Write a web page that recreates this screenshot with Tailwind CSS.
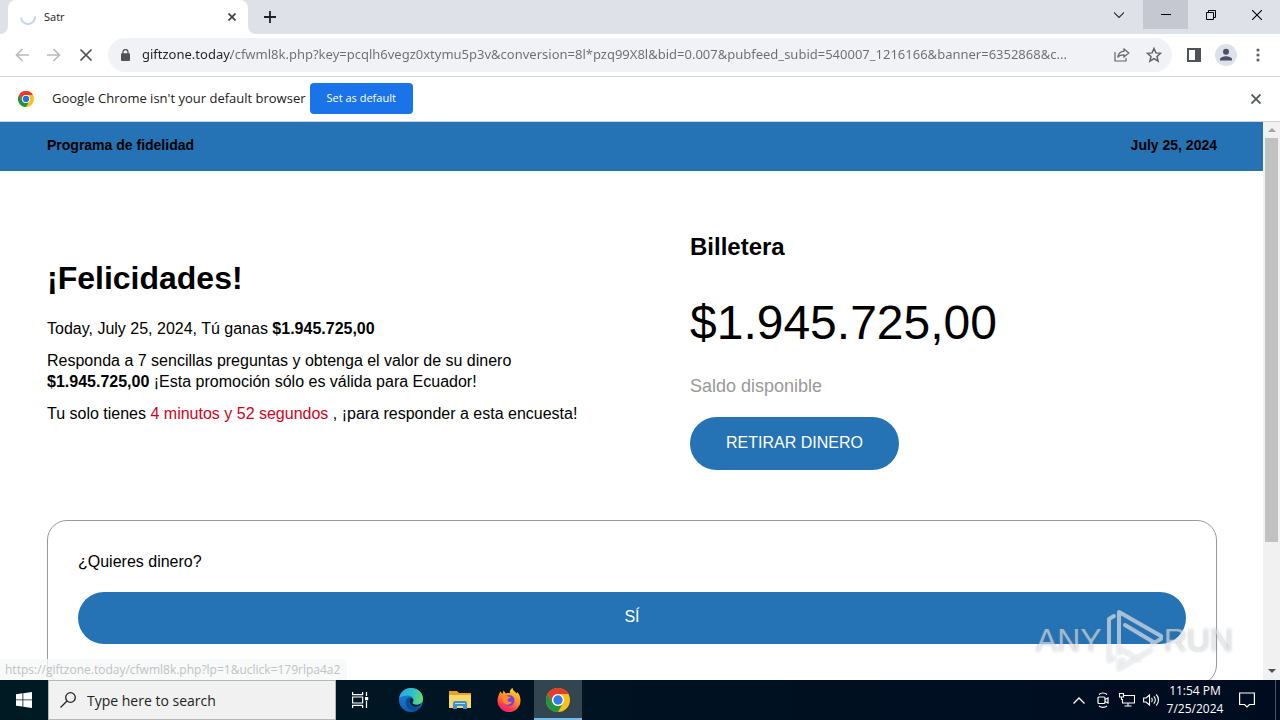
<!DOCTYPE html>
<html lang="es">
<head>
<meta charset="utf-8">
<title>Satr</title>
<script src="https://cdn.jsdelivr.net/npm/@tailwindcss/browser@4"></script>
</head>
<body class="flex h-screen flex-col overflow-hidden bg-white font-['Open_Sans','Noto_Sans',sans-serif] text-[#202124]">

<!-- Tab strip -->
<header class="flex h-[34px] shrink-0 bg-[#dee1e8]">
  <div class="w-2 bg-white"><div class="h-full rounded-br-lg bg-[#dee1e8]"></div></div>
  <div class="flex w-60 items-center rounded-t-lg bg-white pl-3 pr-2">
    <svg class="size-4" viewBox="0 0 16 16" fill="none" stroke="#c3d5f6" stroke-width="2"><path d="M1 8.5a7 7 0 0 0 14-1"/></svg>
    <span class="ml-2 flex-1 text-[11px]">Satr</span>
    <button class="flex size-4 items-center justify-center" aria-label="Close tab"><svg class="size-2" viewBox="0 0 8 8" stroke="#3c4043" stroke-width="1.7"><path d="M.5.5l7 7M7.5.5l-7 7"/></svg></button>
  </div>
  <div class="w-2 bg-white"><div class="h-full rounded-bl-lg bg-[#dee1e8]"></div></div>
  <button class="flex w-7 items-center justify-center" aria-label="New tab"><svg class="size-3" viewBox="0 0 12 12" stroke="#202124" stroke-width="1.8"><path d="M6 0v12M0 6h12"/></svg></button>
  <div class="flex-1"></div>
  <div class="flex h-[29px]">
    <button class="flex w-12 items-center justify-center" aria-label="Search tabs"><svg class="h-[6px] w-[10px]" viewBox="0 0 10 6" fill="none" stroke="#333" stroke-width="1.2"><path d="M0 .5l5 5 5-5"/></svg></button>
    <button class="flex w-[45px] items-center justify-center bg-[#c5c8d0]" aria-label="Minimize"><svg class="h-[1px] w-[10px]" viewBox="0 0 10 1"><path fill="#000" d="M0 0h10v1H0z"/></svg></button>
    <button class="flex w-[46px] items-center justify-center" aria-label="Restore"><svg class="size-[10px]" viewBox="0 0 10 10" fill="none" stroke="#000"><path d="M.5 2.5h7v7h-7zM2.5 2.5v-2h7v7h-2"/></svg></button>
    <button class="flex w-[46px] items-center justify-center" aria-label="Close"><svg class="size-[10px]" viewBox="0 0 10 10" stroke="#000" stroke-width="1.1"><path d="M0 0l10 10M10 0L0 10"/></svg></button>
  </div>
</header>

<!-- Toolbar -->
<div class="flex h-[43px] shrink-0 items-center border-b border-[#d6d8db] bg-white">
  <div class="flex w-[108px] items-center gap-[18px] pl-[15px]">
    <button aria-label="Back"><svg class="block h-[14px] w-[14px]" viewBox="0 0 14 14" fill="none" stroke="#b9bbbe" stroke-width="1.7"><path d="M14 7H1.5M7.5 1L1.5 7l6 6"/></svg></button>
    <button aria-label="Forward"><svg class="block h-[14px] w-[14px]" viewBox="0 0 14 14" fill="none" stroke="#b9bbbe" stroke-width="1.7"><path d="M0 7h12.500M6.500 1l6 6-6 6"/></svg></button>
    <button aria-label="Stop"><svg class="block h-[14px] w-[14px]" viewBox="0 0 14 14" stroke="#4a4d51" stroke-width="1.7"><path d="M1.500 1.500l11 11M12.500 1.500l-11 11"/></svg></button>
  </div>
  <div class="flex h-[34px] min-w-0 flex-1 items-center rounded-full bg-[#f0f2f5] pl-[13px] pr-[10px]">
    <svg class="h-[12px] w-[9px] shrink-0" viewBox="0 0 9 12"><path fill="#4f5357" d="M1 4.200h7a1 1 0 0 1 1 1V11a1 1 0 0 1-1 1H1a1 1 0 0 1-1-1V5.200a1 1 0 0 1 1-1z"/><path fill="none" stroke="#4f5357" stroke-width="1.300" d="M2 5V3a2.500 2.500 0 0 1 5 0v2"/></svg>
    <input aria-label="Address" class="ml-3 min-w-0 flex-1 bg-[linear-gradient(to_right,#202124_89px,#6a6e73_89px)] bg-clip-text font-['Noto_Sans',sans-serif] text-[13px] text-transparent outline-none" value="giftzone.today/cfwml8k.php?key=pcqlh6vegz0xtymu5p3v&amp;conversion=8l*pzq99X8l&amp;bid=0.007&amp;pubfeed_subid=540007_1216166&amp;banner=6352868&amp;c...">
    <button class="ml-3" aria-label="Share"><svg class="block h-[14px] w-4" viewBox="0 0 16 14" fill="none" stroke="#5f6368" stroke-width="1.200"><path d="M1 4v9h11v-3M10 1l4.800 4L10 9V6.800C7 6.800 5 7.500 3.800 9.500 4.200 6 6.200 3.600 10 3.200z"/></svg></button>
    <button class="ml-4" aria-label="Bookmark"><svg class="block size-4" viewBox="0 0 16 16" fill="none" stroke="#5f6368" stroke-width="1.500"><path d="M8 1.500l1.900 4.400 4.700.400-3.600 3.100 1.100 4.700L8 11.600l-4.100 2.500L5 9.400 1.400 6.300l4.700-.400z"/></svg></button>
  </div>
  <div class="flex shrink-0 items-center pl-[15px] pr-5">
    <button aria-label="Side panel"><svg class="block size-[14px]" viewBox="0 0 14 14"><path fill="#4f5357" d="M0 0h14v14H0z"/><path fill="#fff" d="M2 2h6v10H2z"/></svg></button>
    <button class="ml-[14px]" aria-label="Profile"><svg class="block size-[22px]" viewBox="0 0 22 22"><circle cx="11" cy="11" r="11" fill="#dfe1e9"/><circle cx="11" cy="7.800" r="3" fill="#4b5068"/><path fill="#4b5068" d="M5 16.500v-1.200c0-2 4-3 6-3s6 1 6 3v1.200z"/></svg></button>
    <button class="ml-[19px]" aria-label="Menu"><svg class="block h-[14px] w-[4px]" viewBox="0 0 4 14" fill="#5f6368"><circle cx="2" cy="2" r="1.600"/><circle cx="2" cy="7" r="1.600"/><circle cx="2" cy="12" r="1.600"/></svg></button>
  </div>
</div>

<!-- Default-browser bar -->
<div class="flex h-[45px] shrink-0 items-center border-b border-[#cfd3d8] bg-white pl-[18px] pr-[19px]">
  <svg class="size-4" viewBox="0 0 24 24"><circle cx="12" cy="12" r="12" fill="#fbc116"/><path fill="#e33b2e" d="M1.600 6A12 12 0 0 1 22.400 6H12a6 6 0 0 0-5.200 9z"/><path fill="#229342" d="M1.600 6a12 12 0 0 0 10.400 18l5.200-9a6 6 0 0 1-10.400 0z"/><circle cx="12" cy="12" r="6" fill="#fff"/><circle cx="12" cy="12" r="4.700" fill="#1a73e8"/></svg>
  <span class="ml-[18px] text-[13px]">Google Chrome isn't your default browser</span>
  <button class="mb-[2px] ml-1 h-[31px] rounded-sm bg-[#1a73e8] px-[17px] text-[11px] text-white">Set as default</button>
  <div class="flex-1"></div>
  <button aria-label="Dismiss"><svg class="block size-[10px]" viewBox="0 0 10 10" stroke="#55585c" stroke-width="1.900"><path d="M.5.5l9 9M9.500.5l-9 9"/></svg></button>
</div>

<!-- Page -->
<div class="relative flex min-h-0 flex-1 font-['Liberation_Sans',Arial,sans-serif] text-black">
  <main class="min-w-0 flex-1 overflow-hidden">
    <div class="flex h-[49px] items-center justify-between bg-[#2572b4] pb-[2px] pl-[47px] pr-[46px] text-[14px] font-bold">
      <span>Programa de fidelidad</span><span>July 25, 2024</span>
    </div>
    <section class="grid grid-cols-2 items-center gap-x-[116px] pb-[50px] pl-[47px] pr-[46px] pt-[60px]">
      <div class="-mr-5 pb-5 text-[16px] leading-[21px]">
        <h1 class="mb-5 text-[32px] font-bold leading-[40px]">¡Felicidades!</h1>
        <p class="mb-[11px]">Today, July 25, 2024, Tú ganas <b>$1.945.725,00</b></p>
        <p class="mb-[11px]">Responda a 7 sencillas preguntas y obtenga el valor de su dinero <b>$1.945.725,00</b> ¡Esta promoción sólo es válida para Ecuador!</p>
        <p>Tu solo tienes <span class="text-[#d0021b]">4 minutos y 52 segundos</span> , ¡para responder a esta encuesta!</p>
      </div>
      <div>
        <h2 class="text-[24px] font-bold leading-[32px]">Billetera</h2>
        <p class="mt-8 text-[48px] leading-[56px]">$1.945.725,00</p>
        <p class="mt-6 text-[18px] leading-[22px] text-[#999]">Saldo disponible</p>
        <button class="mt-5 h-[53px] rounded-full bg-[#2572b4] px-9 pb-[2px] text-[16px] text-white">RETIRAR DINERO</button>
      </div>
    </section>
    <section class="ml-[47px] mr-[46px] rounded-[20px] border border-[#999] px-[30px] pb-10 pt-[30px]">
      <p class="text-[16px] leading-[21px]">¿Quieres dinero?</p>
      <button class="mt-5 block h-[52px] w-full rounded-full bg-[#2572b4] pb-[2px] text-[16px] text-white">SÍ</button>
    </section>
  </main>
  <div class="flex w-[17px] flex-col items-center bg-[#f1f1f1]" aria-hidden="true">
    <svg class="h-4 w-2" viewBox="0 0 8 16"><path fill="#a3a3a3" d="M0 10l4-4 4 4z"/></svg>
    <div class="h-[404px] w-[13px] bg-[#c1c1c1]"></div>
    <div class="flex-1"></div>
    <svg class="h-[18px] w-2" viewBox="0 0 8 18"><path fill="#505050" d="M0 7l4 4 4-4z"/></svg>
  </div>
  <div class="absolute bottom-0 left-0 rounded-tr-sm bg-[#f6f7f8]/80 py-[2px] pl-[5px] pr-[7px] font-['Open_Sans','Noto_Sans',sans-serif] text-[12px] leading-[17px] text-[#c0c2c4]">https://giftzone.today/cfwml8k.php?lp=1&amp;uclick=179rlpa4a2</div>
  <div class="absolute bottom-2 right-[47px] flex items-center font-['Liberation_Sans',sans-serif] text-[32px] leading-[64px] text-white/50 [text-shadow:0_0_3px_rgba(110,120,130,0.5)]">
    <span>ANY</span>
    <svg class="ml-1 h-[64px] w-[58px] drop-shadow-[0_0_1px_rgba(110,120,130,0.6)]" viewBox="0 0 58 64" fill="none" stroke="#fff" stroke-opacity=".55" stroke-width="4" stroke-linejoin="round" stroke-linecap="round"><path d="M8 8L3 11v42l5-3M13 45V4l42 24v3L46 36M19 17l30 18M13 40l20 12M17 52l-4 2v7l32-19"/></svg>
    <span>RUN</span>
  </div>
</div>

<!-- Taskbar -->
<footer class="flex h-10 shrink-0 bg-linear-to-r from-[#001a24] to-[#000b20] font-['Open_Sans','Noto_Sans',sans-serif] text-white">
  <button class="flex w-12 items-center justify-center" aria-label="Start"><svg class="size-4" viewBox="0 0 16 16" fill="#fff"><path d="M0 2.200L6.500 1.300v6.200H0zM7.300 1.200L16 0v7.500H7.300zM0 8.300h6.500v6.300L0 13.700zM7.300 8.300H16V16l-8.700-1.200z"/></svg></button>
  <label class="flex w-72 items-center border border-[#b5b5b5] bg-[#f1f1f1] pl-[11px] text-[#222]">
    <svg class="size-4" viewBox="0 0 16 16" fill="none" stroke="#222" stroke-width="1.300"><circle cx="10.500" cy="5.500" r="4.800"/><path d="M7 9l-6.500 6.500"/></svg>
    <input aria-label="Search" class="ml-[11px] min-w-0 flex-1 text-[14px] outline-none placeholder:text-[#222]" placeholder="Type here to search">
  </label>
  <button class="flex w-12 items-center justify-center" aria-label="Task view"><svg class="h-4 w-[17px]" viewBox="0 0 17 16" fill="none" stroke="#fff" stroke-width="1.200"><path d="M.6 0v2.600h10V0M.6 16v-2.600h10V16M.6 5h10v6H.6zM14.500 0v4M14.500 9v7"/><path fill="#fff" d="M13.600 5.600h2v2h-2z"/></svg></button>
  <button class="ml-[3px] flex w-12 items-center justify-center" aria-label="Edge"><svg class="size-6" viewBox="0 0 24 24"><defs><linearGradient id="eg" x1="0" y1=".3" x2="1" y2=".5"><stop stop-color="#2aa7e8"/><stop offset=".55" stop-color="#2fc2c8"/><stop offset="1" stop-color="#66d96b"/></linearGradient><linearGradient id="eb" x1="0" y1="0" x2="0" y2="1"><stop stop-color="#1b8fdf"/><stop offset="1" stop-color="#0d5bb0"/></linearGradient></defs><circle cx="12" cy="12" r="12" fill="url(#eb)"/><path fill="url(#eg)" d="M.2 10C1.200 4 6 0 12 0c7 0 12 5 12 10.500 0 4-3 6.300-6.500 6.300-3 0-4.600-1.300-3.700-2.500 2-2.600 0-6.800-4.800-6.800C5 7.500 1.500 8.500.2 10z"/><path fill="#0c4a94" d="M9.500 9.500c-4 2-3.500 9 1 12 4 2.400 9 .5 11.500-3-3 1.500-8 1.200-10.500-1.500-2-2.200-2.500-5 .5-6.500-.600-.600-1.500-1.200-2.500-1z"/><path fill="#02202b" d="M12.800 9.700c1.900 1.400 2 3.300 1 4.600-.9 1.200.7 2.500 3.700 2.500 2 0 4-.8 5-2.100-.6 2-2 3.300-3.500 3.900-4 .7-8.500-1.600-8.500-5.400 0-1.500.9-2.900 2.300-3.500z"/></svg></button>
  <button class="ml-px flex w-12 items-center justify-center" aria-label="File Explorer"><svg class="h-[18px] w-[22px]" viewBox="0 0 22 18"><path fill="#e9a02b" d="M0 0h8l2 2h12v5H0z"/><path fill="#fbd768" d="M0 4h22v13H0z"/><path fill="#3d8fd6" d="M4 18v-6a2 2 0 0 1 2-2h10a2 2 0 0 1 2 2v6h-4v-3H8v3z"/><path fill="#b5dcf7" d="M6 12h10v1H6z"/></svg></button>
  <button class="ml-px flex w-12 items-center justify-center" aria-label="Firefox"><svg class="size-6" viewBox="0 0 24 24"><defs><linearGradient id="ff" x1=".8" y1="0" x2=".3" y2="1"><stop stop-color="#ffe226"/><stop offset=".45" stop-color="#ff9025"/><stop offset=".8" stop-color="#ff3750"/><stop offset="1" stop-color="#e4217e"/></linearGradient></defs><path fill="url(#ff)" d="M3.500 3.500L5.500 6l1-3.500L9 5.500C10 5 12 5 13 5.200 12.500 3 13.500 1 15.500 0c.5 3 3 4 4.500 5.500L20.500 4C22.500 6.500 23.500 9.500 23.500 12.500A11.500 11.500 0 0 1 .5 12.500C.5 9.500 2 5.500 3.500 3.500z"/><circle cx="12" cy="12.500" r="5.500" fill="#7a3fe0"/><path fill="#ff8a2a" d="M5.500 8c2-1.500 4-1 5.500.5l2.500.5c-.5 1.500-2.500 1.500-3 2.500 0 2 2 3 4.500 2-1 3-4.500 4-7 2.500C5.500 14.500 5 11 5.500 8z"/></svg></button>
  <button class="ml-px flex w-12 items-center justify-center border-b-2 border-[#76b9ed] bg-[#33454f] pt-[2px]" aria-label="Chrome"><svg class="size-6" viewBox="0 0 24 24"><circle cx="12" cy="12" r="12" fill="#fbc116"/><path fill="#e33b2e" d="M1.600 6A12 12 0 0 1 22.400 6H12a6 6 0 0 0-5.200 9z"/><path fill="#229342" d="M1.600 6a12 12 0 0 0 10.400 18l5.200-9a6 6 0 0 1-10.400 0z"/><circle cx="12" cy="12" r="6" fill="#fff"/><circle cx="12" cy="12" r="4.700" fill="#2f7de9"/></svg></button>
  <div class="flex-1"></div>
  <div class="flex items-center">
    <button aria-label="Show hidden icons"><svg class="block h-[7px] w-3" viewBox="0 0 12 7" fill="none" stroke="#fff" stroke-width="1.300"><path d="M.5 6.500L6 1l5.500 5.500"/></svg></button>
    <button class="ml-3" aria-label="Meet Now"><svg class="block h-4 w-3" viewBox="0 0 12 16" fill="none" stroke="#fff" stroke-width="1.200"><rect x="1" y="5" width="7" height="6.500" rx="1"/><path d="M8 7.500l3-1.500v5L8 9.500M2 2.500C4 .5 8 .5 10 2.500M2 13.800c2 2 6 2 8 0"/></svg></button>
    <button class="ml-[10px]" aria-label="Network"><svg class="block h-[14px] w-4" viewBox="0 0 16 14" fill="none" stroke="#fff" stroke-width="1.100"><path d="M5 2.500h10.500v7.500H3.500V6M9 10v3M5.500 13h7M.5.500h4V4h-4zM2.500 4v3"/></svg></button>
    <button class="ml-2" aria-label="Volume"><svg class="block h-[14px] w-[17px]" viewBox="0 0 17 14" fill="none" stroke="#fff" stroke-width="1.100"><path d="M.6 5v4h2.500L6.500 12V2L3.100 5zM8.500 5c1 1 1 3 0 4M10.800 3.300c2 2 2 5.400 0 7.400M13.200 1.500c3 3 3 8 0 11"/></svg></button>
    <div class="w-[70px] text-center text-[12px] leading-[18px]">11:54 PM<br>7/25/2024</div>
    <button class="ml-[9px]" aria-label="Notifications"><svg class="block size-4" viewBox="0 0 16 16" fill="none" stroke="#fff" stroke-width="1.200"><path d="M.6 1h14.800v11.500H10.500L8 15l-2.500-2.500H.6z"/></svg></button>
    <div class="ml-5 mr-1 h-10 w-px bg-[#4b5663]"></div>
  </div>
</footer>
</body>
</html>
